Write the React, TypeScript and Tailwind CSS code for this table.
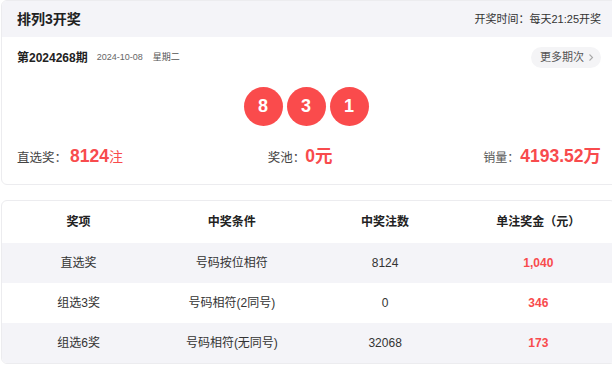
import React from 'react';

const rows = [
  { name: '直选奖', rule: '号码按位相符', count: '8124', prize: '1,040' },
  { name: '组选3奖', rule: '号码相符(2同号)', count: '0', prize: '346' },
  { name: '组选6奖', rule: '号码相符(无同号)', count: '32068', prize: '173' },
];

const balls = ['8', '3', '1'];

const App: React.FC = () => {
  return (
    <div
      className="w-[612px] h-[366px] overflow-hidden bg-white text-[#333]"
      style={{ fontFamily: '"Liberation Sans", "Noto Sans CJK SC", sans-serif' }}
    >
      <div className="pl-[1px]">
        {/* Draw result card */}
        <div className="w-[620px] rounded-[6px] border border-[#ececef] overflow-hidden">
          <div className="h-[36px] bg-[#f4f4f8] flex items-center justify-between pl-[15px] pr-[19px]">
            <h1 className="text-[14px] font-bold text-[#222]">排列3开奖</h1>
            <span className="text-[11px] text-[#333]">开奖时间：每天21:25开奖</span>
          </div>

          <div className="pl-[15px] pr-[19px] pt-[10px] pb-[16px]">
            <div className="flex items-center justify-between h-[21px]">
              <div className="flex items-center">
                <span className="text-[12px] font-bold text-[#222]">第2024268期</span>
                <span className="ml-[9px] text-[9px] text-[#666]">2024-10-08</span>
                <span className="ml-[10px] text-[9px] text-[#555]">星期二</span>
              </div>
              <button className="h-[21px] w-[70px] rounded-full bg-[#f4f4f6] flex items-center pl-[9px] text-[11px] text-[#555]">
                更多期次
                <svg className="ml-[4px]" width="6" height="9" viewBox="0 0 6 9" fill="none">
                  <path d="M1.5 1.5 L4.5 4.5 L1.5 7.5" stroke="#aaa" strokeWidth="1.1" />
                </svg>
              </button>
            </div>

            <div className="flex justify-center gap-[4px] mt-[19px] pr-[6px]">
              {balls.map((b, i) => (
                <div
                  key={i}
                  className="w-[39px] h-[39px] rounded-full bg-[#fa4b4c] flex items-center justify-center text-white text-[18px] font-bold"
                >
                  {b}
                </div>
              ))}
            </div>

            <div className="mt-[18px] h-[24px] flex items-center justify-between">
              <div className="flex items-baseline">
                <span className="text-[12.5px] text-[#444]">直选奖：</span>
                <span className="ml-[3px] text-[17.5px] font-bold text-[#f84b4d]">8124</span>
                <span className="text-[14px] text-[#f84b4d]">注</span>
              </div>
              <div className="flex items-baseline pr-[6px]">
                <span className="text-[12.5px] text-[#444]">奖池：</span>
                <span className="text-[17.5px] font-bold text-[#f84b4d]">0元</span>
              </div>
              <div className="flex items-baseline">
                <span className="text-[12px] text-[#555]">销量：</span>
                <span className="ml-[1px] text-[17.5px] font-bold text-[#f84b4d]">4193.52万</span>
              </div>
            </div>
          </div>
        </div>

        {/* Prize table card */}
        <div className="mt-[15px] w-[615px] rounded-[6px] border border-[#ececef] overflow-hidden">
          <div className="grid grid-cols-4 h-[42px] items-center text-center text-[12px] font-bold text-[#222]">
            <span>奖项</span>
            <span>中奖条件</span>
            <span>中奖注数</span>
            <span>单注奖金（元）</span>
          </div>
          {rows.map((r, i) => (
            <div
              key={r.name}
              className={`grid grid-cols-4 h-[40px] items-center text-center text-[12px] text-[#333] ${
                i % 2 === 0 ? 'bg-[#f4f4f8]' : 'bg-white'
              }`}
            >
              <span>{r.name}</span>
              <span>{r.rule}</span>
              <span>{r.count}</span>
              <span className="font-bold text-[#f84b4d]">{r.prize}</span>
            </div>
          ))}
        </div>
      </div>
    </div>
  );
};

export default App;
